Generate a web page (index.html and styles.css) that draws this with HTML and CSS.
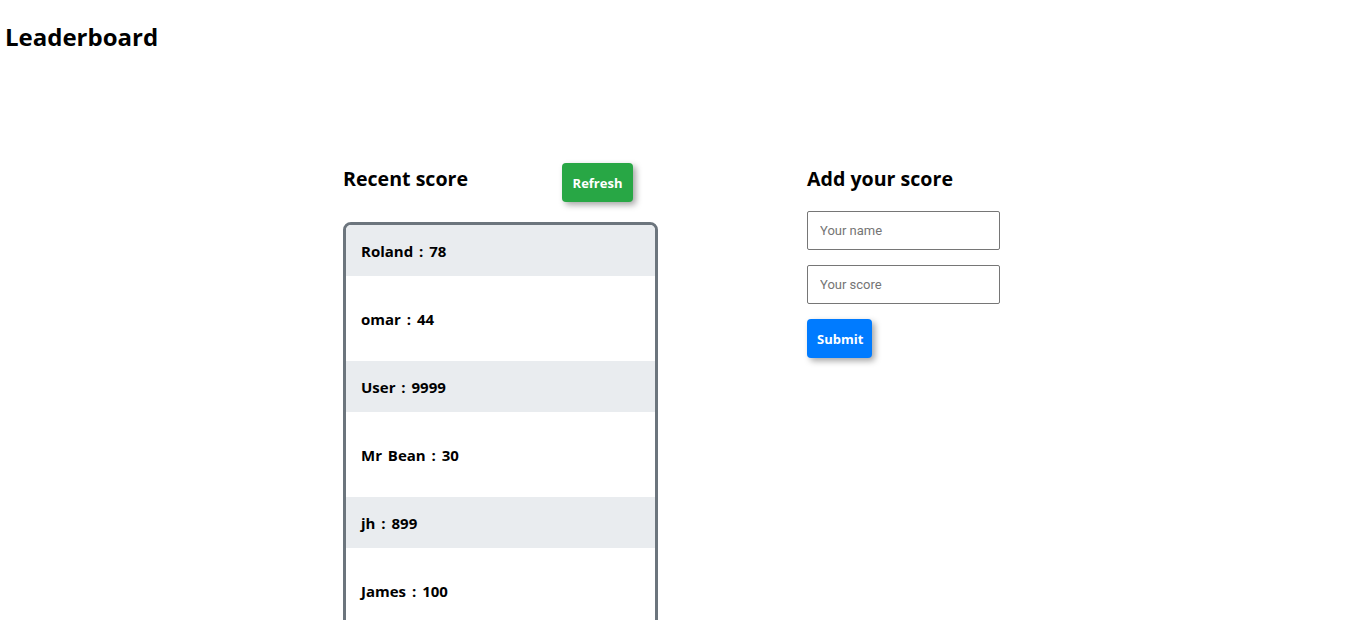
FILE: index.html
```html
<!DOCTYPE html>
<html>
<head>
<meta charset="utf-8">
<title>Leaderboard</title>
<link rel="stylesheet" href="styles.css">
</head>
<body>
<header class="top">
  <h1 class="title">Leaderboard</h1>
</header>
<main class="board">
  <section class="recent">
    <div class="recent-head">
      <h2 class="section-title">Recent score</h2>
      <button class="btn btn-refresh" type="button">Refresh</button>
    </div>
    <ul class="scores">
      <li class="row odd">Roland : 78</li>
      <li class="row even">omar : 44</li>
      <li class="row odd">User : 9999</li>
      <li class="row even">Mr Bean : 30</li>
      <li class="row odd">jh : 899</li>
      <li class="row even">James : 100</li>
    </ul>
  </section>
  <section class="add">
    <h2 class="section-title">Add your score</h2>
    <form class="form">
      <input class="field" type="text" placeholder="Your name">
      <input class="field" type="text" placeholder="Your score">
      <button class="btn btn-submit" type="button">Submit</button>
    </form>
  </section>
</main>
</body>
</html>
```
FILE: styles.css
```css
* { box-sizing: border-box; }
html, body { margin: 0; padding: 0; background: #fff; }
body {
  font-family: "Comic Sans MS", "Open Sans", sans-serif;
  color: #000;
  overflow-x: hidden;
}
.top { padding: 20px 5px 0; height: 160px; }
.title { margin: 0; font-size: 24px; font-weight: 700; line-height: 34px; }
.board {
  display: flex;
  justify-content: center;
  gap: 149px;
  padding-right: 4px;
}
.recent { width: 315px; }
.recent-head {
  display: flex;
  align-items: flex-start;
  height: 62px;
  padding-right: 25px;
  justify-content: space-between;
}
.section-title { margin: 5px 0 0; font-size: 19.6px; font-weight: 700; line-height: 28px; }
.btn {
  border: 0;
  border-radius: 4px;
  color: #fff;
  font-family: "Comic Sans MS", "Open Sans", sans-serif;
  font-weight: 700;
  font-size: 13px;
  height: 39px;
  padding: 0 10px;
  box-shadow: 3px 3px 6px rgba(0,0,0,0.35);
  cursor: pointer;
}
.btn-refresh { background: #28a745; margin-top: 3px; width: 71px; }
.btn-submit { background: #007bff; width: 65px; }
.scores {
  list-style: none;
  margin: 0;
  padding: 0;
  border: 3px solid #6c757d;
  border-radius: 8px;
  overflow: hidden;
}
.row {
  display: flex;
  align-items: center;
  padding: 0 15px;
  font-size: 15px;
  font-weight: 700;
  word-spacing: 2px;
}
.odd { background: #e9ecef; height: 51px; }
.even { background: #fff; height: 85px; }
.add { width: 193px; }
.form { display: flex; flex-direction: column; align-items: flex-start; gap: 15px; margin-top: 18px; }
.field {
  width: 193px;
  height: 39px;
  border: 1px solid #767676;
  border-radius: 2px;
  padding: 0 12px;
  font-family: Roboto, sans-serif;
  font-size: 13px;
}
.field::placeholder { color: #757575; }
```
